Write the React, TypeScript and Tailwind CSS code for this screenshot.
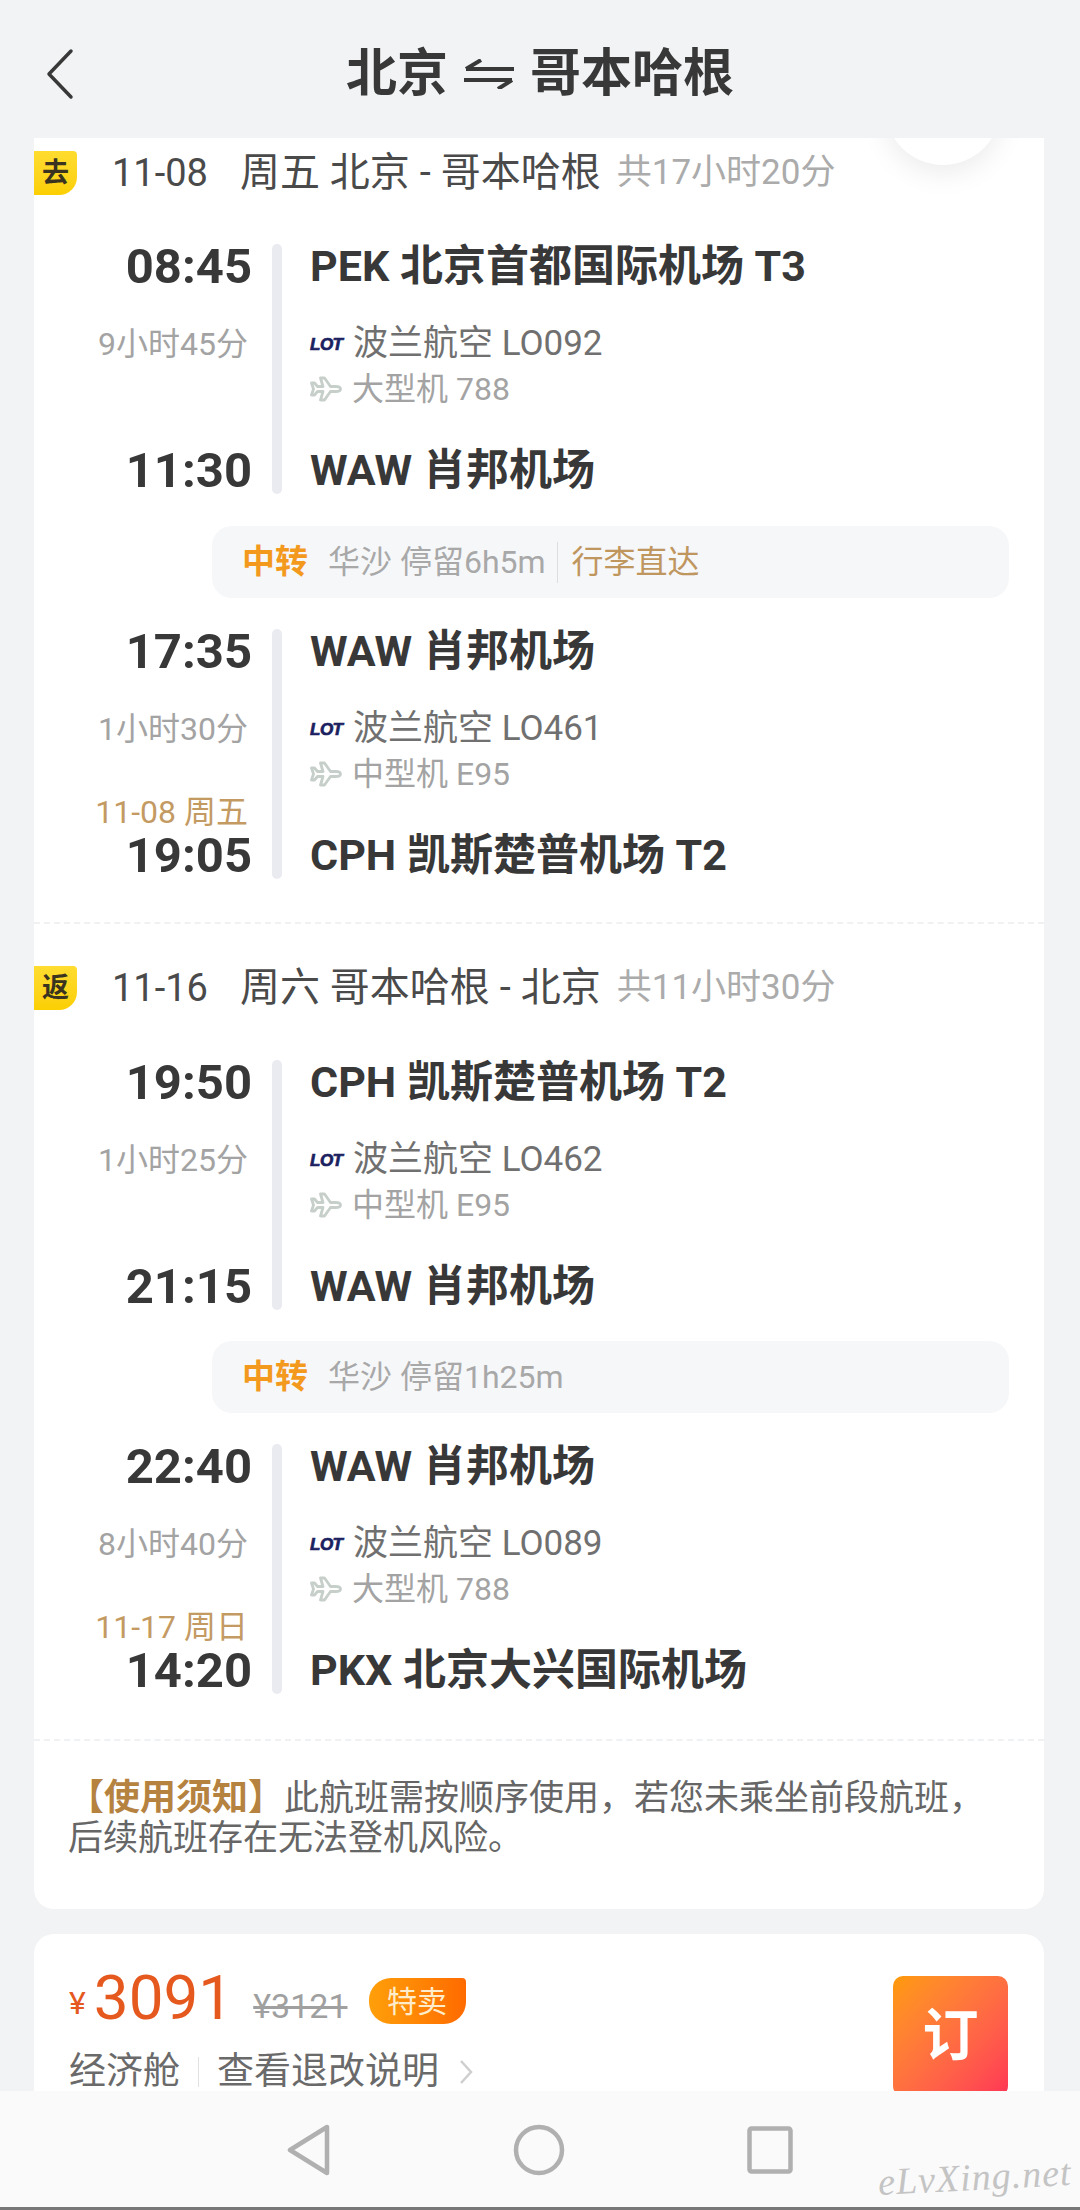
import React from "react";

type Leg = {
  dep: string; arr: string; depName: string; arrName: string; dur: string;
  airline: string; plane: string; arrDate?: string;
};

function PlaneIcon() {
  return (
    <svg width="32" height="26" viewBox="0 0 32 26" fill="none" stroke="#c6cfca" strokeWidth="2.8" strokeLinejoin="round">
      <path d="M30.5 13c0-1.5-2-2.5-5-2.5h-5L14.5 2h-4l2.5 8.5H7.5L4.5 7H1.5l2 6-2 6h3l3-3.5H13L10.5 24h4l6-8.5h5c3 0 5-1 5-2.5z" />
    </svg>
  );
}

function Block({ leg }: { leg: Leg }) {
  return (
    <div className="flex h-[250px]">
      <div className="w-[218px] flex flex-col text-right">
        <div className="h-[46px] leading-[46px] text-[49px] font-bold text-[#383838]">{leg.dep}</div>
        <div className="mt-[32px] h-[44px] leading-[44px] text-[32px] text-[#a3a3a3] pr-[4px]">{leg.dur}</div>
        <div className="mt-auto">
          {leg.arrDate && (
            <div className="h-[30px] leading-[30px] mb-[6px] text-[32px] text-[#c49a63] pr-[4px]">{leg.arrDate}</div>
          )}
          <div className="h-[46px] leading-[46px] text-[49px] font-bold text-[#383838]">{leg.arr}</div>
        </div>
      </div>
      <div className="ml-[20px] w-[10px] rounded-full bg-[#e9ebf0]" />
      <div className="ml-[28px] flex-1 flex flex-col">
        <div className="h-[46px] leading-[44px] text-[43px] font-bold text-[#383838] whitespace-pre">{leg.depName}</div>
        <div className="mt-[32px] h-[44px] flex items-center">
          <span className="w-[43px] font-['Liberation_Sans',sans-serif] text-[17px] leading-none font-black italic text-[#1b2160] tracking-[-0.5px] [-webkit-text-stroke:0.7px_#1b2160]">LOT</span>
          <span className="text-[35px] text-[#707070]">{leg.airline}</span>
        </div>
        <div className="h-[46px] flex items-center">
          <span className="w-[42px] flex"><PlaneIcon /></span>
          <span className="text-[32px] text-[#a3a3a3]">{leg.plane}</span>
        </div>
        <div className="mt-auto h-[46px] leading-[44px] text-[43px] font-bold text-[#383838] whitespace-pre">{leg.arrName}</div>
      </div>
    </div>
  );
}

function Transfer({ text, baggage }: { text: string; baggage?: boolean }) {
  return (
    <div className="ml-[178px] mr-[35px] h-[72px] rounded-[20px] bg-[#f6f7f9] flex items-center pl-[30px]">
      <span className="text-[33px] font-bold text-[#f39a1e]">中转</span>
      <span className="ml-[20px] text-[32px] text-[#a8a8a8]">{text}</span>
      {baggage && (
        <>
          <span className="ml-[11px] w-px h-[41px] bg-[#dedede]" />
          <span className="ml-[14px] text-[32px] text-[#c0965f]">行李直达</span>
        </>
      )}
    </div>
  );
}

function TripHeader({ badge, date, rest, total }: { badge: string; date: string; rest: string; total: string }) {
  return (
    <div className="flex items-center h-[44px]">
      <div className="w-[43px] h-[44px] bg-gradient-to-b from-[#ffdc2e] to-[#fbcf00] rounded-tr-[4px] rounded-br-[18px] flex items-center justify-center text-[27px] text-[#3a3320] font-bold">
        {badge}
      </div>
      <span className="ml-[35px] text-[38px] text-[#4a4a4a]">{date}</span>
      <span className="ml-[32px] text-[40px] text-[#4a4a4a] whitespace-pre">{rest}</span>
      <span className="ml-[16px] text-[35px] text-[#ababab]">{total}</span>
    </div>
  );
}

const Divider = () => <div className="border-t-2 border-dashed border-[#f0f1f3]" />;

export default function App() {
  return (
    <div className="w-[1080px] h-[2210px] flex flex-col overflow-hidden bg-[#f2f3f5] font-[Roboto,'Noto_Sans_CJK_SC',sans-serif]">
      <header className="h-[138px] shrink-0 relative flex items-center justify-center gap-[15px] pt-[10px] text-[51px] font-bold text-[#383838]">
        <svg className="absolute left-[45px] top-[48px]" width="30" height="52" viewBox="0 0 30 52" fill="none" stroke="#383838" strokeWidth="3.5" strokeLinecap="round" strokeLinejoin="round">
          <path d="M26 3 4 26l22 23" />
        </svg>
        <span>北京</span>
        <svg width="52" height="30" viewBox="0 0 52 30" fill="none" stroke="#383838" strokeWidth="4">
          <path d="M3 10h48M3 10 18 1M1 21h48M49 21 35 30" />
        </svg>
        <span>哥本哈根</span>
      </header>

      <main className="flex-1 min-h-0 overflow-hidden px-[36px] [padding-left:34px]">
        <section className="relative overflow-hidden bg-white rounded-b-[20px] h-[1771px] pt-[13px]">
          <div className="absolute right-[43px] top-[-89px] w-[116px] h-[116px] rounded-full bg-white shadow-[0_8px_28px_rgba(0,0,0,0.08)]" />
          <TripHeader badge="去" date="11-08" rest="周五 北京 - 哥本哈根" total="共17小时20分" />
          <div className="mt-[49px]">
            <Block leg={{ dep: "08:45", arr: "11:30", depName: "PEK 北京首都国际机场 T3", arrName: "WAW 肖邦机场", dur: "9小时45分", airline: "波兰航空 LO092", plane: "大型机 788" }} />
          </div>
          <div className="mt-[32px]"><Transfer text="华沙 停留6h5m" baggage /></div>
          <div className="mt-[31px]">
            <Block leg={{ dep: "17:35", arr: "19:05", depName: "WAW 肖邦机场", arrName: "CPH 凯斯楚普机场 T2", dur: "1小时30分", airline: "波兰航空 LO461", plane: "中型机 E95", arrDate: "11-08 周五" }} />
          </div>
          <div className="mt-[43px]"><Divider /></div>
          <div className="mt-[42px]">
            <TripHeader badge="返" date="11-16" rest="周六 哥本哈根 - 北京" total="共11小时30分" />
          </div>
          <div className="mt-[50px]">
            <Block leg={{ dep: "19:50", arr: "21:15", depName: "CPH 凯斯楚普机场 T2", arrName: "WAW 肖邦机场", dur: "1小时25分", airline: "波兰航空 LO462", plane: "中型机 E95" }} />
          </div>
          <div className="mt-[31px]"><Transfer text="华沙 停留1h25m" /></div>
          <div className="mt-[31px]">
            <Block leg={{ dep: "22:40", arr: "14:20", depName: "WAW 肖邦机场", arrName: "PKX 北京大兴国际机场", dur: "8小时40分", airline: "波兰航空 LO089", plane: "大型机 788", arrDate: "11-17 周日" }} />
          </div>
          <div className="mt-[45px]"><Divider /></div>
          <p className="mt-[37px] mx-[34px] text-[35px] leading-[40px] text-[#666666] w-[920px]">
            <span className="font-bold text-[36px] text-[#b5823f]">【使用须知】</span>此航班需按顺序使用，若您未乘坐前段航班，后续航班存在无法登机风险。
          </p>
        </section>

        <section className="mt-[25px] h-[200px] bg-white rounded-t-[20px] flex justify-between pl-[35px] pr-[36px]">
          <div>
            <div className="mt-[33px] h-[60px] flex items-center">
              <span className="text-[32px] text-[#e5591f] mt-[12px]">¥</span>
              <span className="ml-[8px] text-[62px] text-[#e5591f]">3091</span>
              <span className="ml-[20px] mt-[18px] text-[34px] text-[#a0a0a0] line-through">¥3121</span>
              <span className="ml-[21px] mt-[8px] w-[97px] h-[46px] rounded-tl-[22px] rounded-tr-[4px] rounded-br-[22px] rounded-bl-[22px] bg-gradient-to-r from-[#ff9f0a] to-[#ff6a00] flex items-center justify-center text-[30px] text-[#ffeccb]">
                特卖
              </span>
            </div>
            <div className="mt-[26px] h-[38px] flex items-center text-[37px] text-[#6a6a6a]">
              <span>经济舱</span>
              <span className="ml-[18px] w-px h-[30px] bg-[#e0e0e0]" />
              <span className="ml-[18px]">查看退改说明</span>
              <svg className="ml-[20px]" width="14" height="26" viewBox="0 0 14 26" fill="none" stroke="#cfcfcf" strokeWidth="2.5">
                <path d="M2 2l10 11-10 11" />
              </svg>
            </div>
          </div>
          <div className="mt-[42px] w-[115px] h-[120px] rounded-[10px] bg-gradient-to-br from-[#ff9a00] to-[#ff3355] flex items-center justify-center text-[56px] font-bold text-white">
            订
          </div>
        </section>
      </main>

      <nav className="h-[119px] shrink-0 relative bg-[#fafafa] border-b-[3px] border-[#777777] flex items-center justify-center gap-[182px] pt-[2px]">
        <svg width="44" height="52" viewBox="0 0 44 52" fill="none" stroke="#b0b0b0" strokeWidth="4.5" strokeLinejoin="round">
          <path d="M40 3v46L3 26z" />
        </svg>
        <svg width="52" height="52" viewBox="0 0 52 52" fill="none" stroke="#b0b0b0" strokeWidth="4.5">
          <circle cx="26" cy="26" r="23" />
        </svg>
        <svg width="46" height="48" viewBox="0 0 46 48" fill="none" stroke="#b0b0b0" strokeWidth="4.5" strokeLinejoin="round">
          <rect x="2.5" y="2.5" width="41" height="43" rx="2" />
        </svg>
        <span className="absolute right-[8px] bottom-[8px] font-['Liberation_Serif',serif] italic text-[38px] leading-[44px] tracking-[1px] text-[#c4c4c4] -rotate-3">
          eLvXing.net
        </span>
      </nav>
    </div>
  );
}
